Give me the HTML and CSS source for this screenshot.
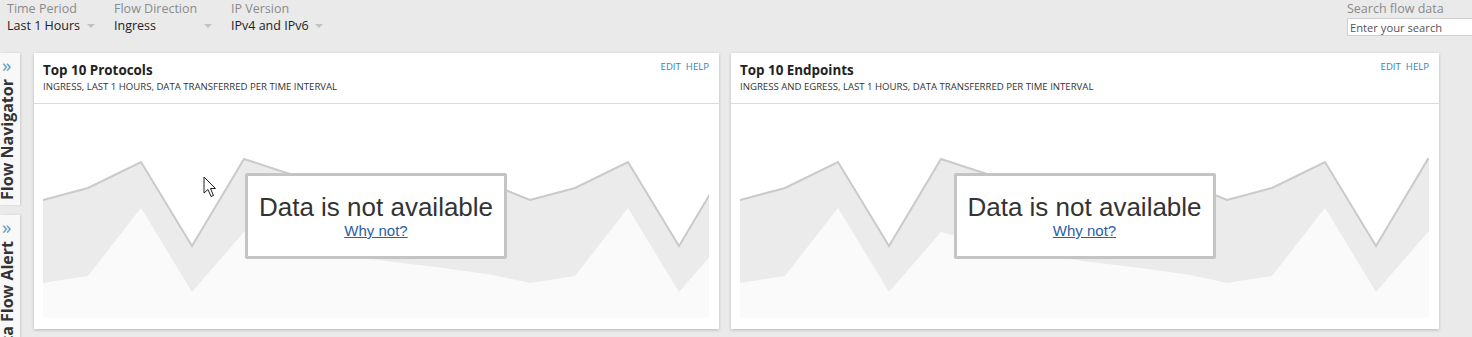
FILE: index.html
```html
<!DOCTYPE html>
<html>
<head>
    <title>Flow Navigator</title>
    <link rel="stylesheet" href="styles.css">
</head>
<body>
    <div class="toolbar">
        <div class="filter filter-time">
            <div class="filter-label">Time Period</div>
            <div class="select"><span>Last 1 Hours</span><span class="caret"></span></div>
        </div>
        <div class="filter filter-direction">
            <div class="filter-label">Flow Direction</div>
            <div class="select"><span>Ingress</span><span class="caret"></span></div>
        </div>
        <div class="filter filter-ip">
            <div class="filter-label">IP Version</div>
            <div class="select"><span>IPv4 and IPv6</span><span class="caret"></span></div>
        </div>
        <div class="search">
            <div class="filter-label">Search flow data</div>
            <input type="text" class="search-input" placeholder="Enter your search">
        </div>
    </div>

    <div class="main">
        <div class="side">
            <div class="side-tab tab-navigator">
                <span class="chevrons">&raquo;</span>
                <span class="side-text">Flow Navigator</span>
            </div>
            <div class="side-tab tab-alert">
                <span class="chevrons">&raquo;</span>
                <span class="side-text">Data Flow Alert</span>
            </div>
        </div>

        <div class="panels">
            <div class="panel panel-protocols">
                <div class="panel-header">
                    <div>
                        <div class="panel-title">Top 10 Protocols</div>
                        <div class="panel-sub">INGRESS, LAST 1 HOURS, DATA TRANSFERRED PER TIME INTERVAL</div>
                    </div>
                    <div class="panel-links"><a>EDIT</a><a>HELP</a></div>
                </div>
                <div class="chart">
                    <svg class="chart-svg">
                        <polygon class="area-low" points="0,179 45,172 98,104 149,188 201,128 250,141 300,151 350,158 400,164 450,171 487,179 532,172 585,104 636,188 688,128 740,141 740,214 0,214"/>
                        <polygon class="area-band" points="0,96 45,84 98,58 149,142 201,55 250,71 300,81 350,74 400,88 450,81 487,96 532,84 585,58 636,142 688,55 740,71 740,141 688,128 636,188 585,104 532,172 487,179 450,171 400,164 350,158 300,151 250,141 201,128 149,188 98,104 45,172 0,179"/>
                        <polyline class="line-top" points="0,96 45,84 98,58 149,142 201,55 250,71 300,81 350,74 400,88 450,81 487,96 532,84 585,58 636,142 688,55 740,71"/>
                    </svg>
                    <div class="no-data">
                        <div class="no-data-title">Data is not available</div>
                        <a class="no-data-link">Why not?</a>
                    </div>
                </div>
            </div>

            <div class="panel panel-endpoints">
                <div class="panel-header">
                    <div>
                        <div class="panel-title">Top 10 Endpoints</div>
                        <div class="panel-sub">INGRESS AND EGRESS, LAST 1 HOURS, DATA TRANSFERRED PER TIME INTERVAL</div>
                    </div>
                    <div class="panel-links"><a>EDIT</a><a>HELP</a></div>
                </div>
                <div class="chart">
                    <svg class="chart-svg">
                        <polygon class="area-low" points="0,179 45,172 98,104 149,188 201,128 250,141 300,151 350,158 400,164 450,171 487,179 532,172 585,104 636,188 688,128 740,141 740,214 0,214"/>
                        <polygon class="area-band" points="0,96 45,84 98,58 149,142 201,55 250,71 300,81 350,74 400,88 450,81 487,96 532,84 585,58 636,142 688,55 740,71 740,141 688,128 636,188 585,104 532,172 487,179 450,171 400,164 350,158 300,151 250,141 201,128 149,188 98,104 45,172 0,179"/>
                        <polyline class="line-top" points="0,96 45,84 98,58 149,142 201,55 250,71 300,81 350,74 400,88 450,81 487,96 532,84 585,58 636,142 688,55 740,71"/>
                    </svg>
                    <div class="no-data">
                        <div class="no-data-title">Data is not available</div>
                        <a class="no-data-link">Why not?</a>
                    </div>
                </div>
            </div>
        </div>
    </div>

    <svg class="cursor" width="14" height="22" viewBox="0 0 14 22">
        <path d="M1,1 L1,17 L5,13.5 L8,20.5 L10.5,19.5 L7.5,12.5 L12.5,12.5 Z" fill="#fff" stroke="#222" stroke-width="1"/>
    </svg>
</body>
</html>
```

FILE: styles.css
```css
body {
    margin: 0;
    background: #eaeaeb;
    font-family: "Open Sans", sans-serif;
    color: #222;
    height: 337px;
    overflow: hidden;
}
.toolbar {
    display: flex;
    height: 53px;
    padding-left: 7px;
}
.filter-label {
    font-size: 12.5px;
    line-height: 17px;
    color: #8a8a8a;
    white-space: nowrap;
}
.filter-time {
    width: 107px;
}
.filter-direction {
    width: 117px;
}
.select {
    display: flex;
    justify-content: space-between;
    align-items: center;
    font-size: 12.5px;
    line-height: 17px;
    color: #222;
    white-space: nowrap;
}
.filter-time .select {
    width: 88px;
}
.filter-direction .select {
    width: 98px;
}
.filter-ip .select {
    width: 92px;
}
.caret {
    width: 0;
    height: 0;
    border-left: 4px solid transparent;
    border-right: 4px solid transparent;
    border-top: 4px solid #c2c2c2;
    margin-top: 1px;
}
.search {
    margin-left: auto;
    width: 125px;
}
.search-input {
    display: block;
    box-sizing: border-box;
    width: 140px;
    height: 18px;
    margin-top: 1px;
    padding: 0 2px;
    border: 1px solid #cfcfcf;
    background: #fff;
    font-family: "Open Sans", sans-serif;
    font-size: 11.2px;
    outline: none;
}
.search-input::placeholder {
    color: #555;
}
.main {
    display: flex;
}
.side {
    width: 20px;
    display: flex;
    flex-direction: column;
    gap: 10px;
}
.side-tab {
    background: #f8f8f8;
    box-shadow: 1px 0 2px rgba(0, 0, 0, 0.12);
    display: flex;
    flex-direction: column;
    align-items: flex-start;
    overflow: hidden;
}
.tab-navigator {
    height: 152px;
}
.tab-alert {
    height: 140px;
}
.chevrons {
    color: #5a9bc4;
    font-size: 19px;
    line-height: 14px;
    margin: 5px 0 0 2px;
}
.side-text {
    writing-mode: vertical-rl;
    transform: rotate(180deg);
    font-weight: bold;
    font-size: 16px;
    color: #333;
    line-height: 20px;
    margin: 7px 0 0 -3px;
    white-space: nowrap;
}
.panels {
    display: flex;
    gap: 12px;
    margin-left: 14px;
}
.panel {
    background: #fff;
    box-shadow: 0 1px 3px rgba(0, 0, 0, 0.22);
    height: 276px;
    display: flex;
    flex-direction: column;
}
.panel-protocols {
    width: 685px;
}
.panel-endpoints {
    width: 708px;
}
.panel-header {
    display: flex;
    justify-content: space-between;
    padding: 9px 10px 10px 9px;
    border-bottom: 1px solid #dcdcdc;
}
.panel-title {
    font-size: 13.4px;
    font-weight: bold;
    line-height: 16px;
}
.panel-sub {
    font-size: 9.6px;
    line-height: 12px;
    margin-top: 3px;
    color: #333;
}
.panel-links {
    font-size: 9.6px;
    line-height: 12px;
    margin-top: -1px;
}
.panel-links a {
    color: #3385b8;
    margin-left: 5px;
}
.chart {
    position: relative;
    flex: 1;
    margin: 0 10px 11px 9px;
    overflow: hidden;
}
.chart-svg {
    display: block;
    width: 100%;
    height: 214px;
}
.area-low {
    fill: #fafafa;
}
.area-band {
    fill: #ebebeb;
}
.line-top {
    fill: none;
    stroke: #cacaca;
    stroke-width: 2;
    stroke-linejoin: miter;
}
.no-data {
    position: absolute;
    left: 50%;
    top: 69px;
    transform: translateX(-50%);
    box-sizing: border-box;
    width: 262px;
    height: 86px;
    background: #fff;
    border: 3px solid #c4c4c4;
    border-radius: 2px;
    text-align: center;
    font-family: "Liberation Sans", Arial, sans-serif;
}
.no-data-title {
    font-size: 26px;
    line-height: 30px;
    color: #333;
    margin-top: 16px;
}
.no-data-link {
    display: inline-block;
    font-size: 15px;
    line-height: 18px;
    color: #2c5ea8;
    text-decoration: underline;
}
.cursor {
    position: absolute;
    left: 203px;
    top: 176px;
}
```
